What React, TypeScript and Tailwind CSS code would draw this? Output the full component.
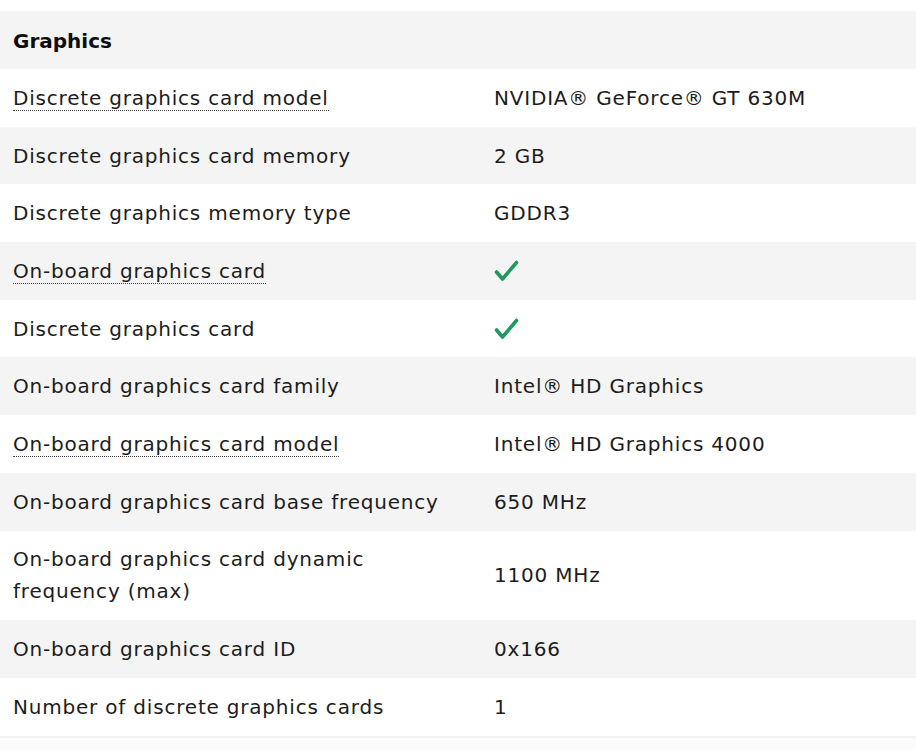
type Row = {
  label: string
  value?: string
  check?: boolean
  dotted?: boolean
}

const rows: Row[] = [
  { label: 'Discrete graphics card model', value: 'NVIDIA® GeForce® GT 630M', dotted: true },
  { label: 'Discrete graphics card memory', value: '2 GB' },
  { label: 'Discrete graphics memory type', value: 'GDDR3' },
  { label: 'On-board graphics card', check: true, dotted: true },
  { label: 'Discrete graphics card', check: true },
  { label: 'On-board graphics card family', value: 'Intel® HD Graphics' },
  { label: 'On-board graphics card model', value: 'Intel® HD Graphics 4000', dotted: true },
  { label: 'On-board graphics card base frequency', value: '650 MHz' },
  { label: 'On-board graphics card dynamic frequency (max)', value: '1100 MHz' },
  { label: 'On-board graphics card ID', value: '0x166' },
  { label: 'Number of discrete graphics cards', value: '1' },
]

function CheckMark() {
  return (
    <svg width="26" height="24" viewBox="0 0 26 24" className="text-[#1f9a5a]">
      <path d="M2.5 13 L8.5 20 L22.5 3.5" fill="none" stroke="currentColor" strokeWidth="3.6" strokeLinecap="round" strokeLinejoin="round" />
    </svg>
  )
}

export default function App() {
  return (
    <div className="w-[916px] h-[750px] overflow-hidden bg-white pt-[11px] text-[#1c1c1c] font-['DejaVu_Sans',sans-serif] text-[20px] leading-[32px]">
      {/* Section header */}
      <div className="bg-[#f4f4f4] h-[58px] flex items-center px-[13px]">
        <h2 className="font-bold text-[#0d0d0d] pt-[2px]">Graphics</h2>
      </div>

      {rows.map((row, i) => (
        <div
          key={row.label}
          className={`flex py-[12.85px] tracking-[0.8px] ${i % 2 === 1 ? 'bg-[#f4f4f4]' : 'bg-white'}`}
        >
          <div className="w-[481px] shrink-0 px-[13px]">
            {row.dotted ? (
              <span className="border-b border-dotted border-[#444]">{row.label}</span>
            ) : (
              <span>{row.label}</span>
            )}
          </div>
          <div className="flex-1 px-[13px] flex items-center">
            {row.check ? <CheckMark /> : <span>{row.value}</span>}
          </div>
        </div>
      ))}

      <div className="h-[2px] bg-[#f2f2f2]" />
      <div className="h-[20px] bg-[#fbfbfb]" />
    </div>
  )
}
